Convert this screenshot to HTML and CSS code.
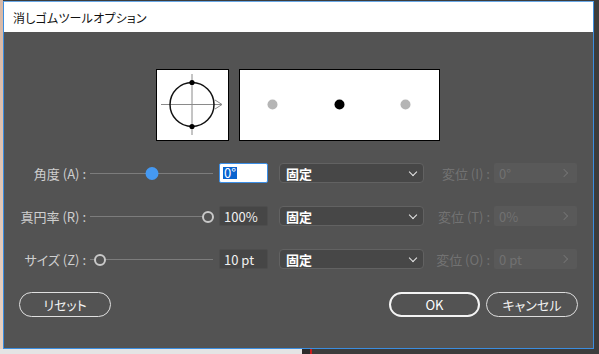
FILE: index.html
```html
<!DOCTYPE html>
<html lang="ja">
<head>
<meta charset="utf-8">
<title>消しゴムツールオプション</title>
<link rel="stylesheet" href="styles.css">
</head>
<body>
<div class="dialog">
  <div class="titlebar">消しゴムツールオプション</div>
  <div class="content">
    <div class="previews">
      <div class="pbox pbox-small">
        <svg width="71" height="70" viewBox="0 0 71 70">
          <line x1="35" y1="4" x2="35" y2="65" stroke="#8a8a8a" stroke-width="1"/>
          <line x1="4" y1="34.5" x2="65" y2="34.5" stroke="#8a8a8a" stroke-width="1"/>
          <polyline points="58,30 65,34.5 58,39" fill="none" stroke="#8a8a8a" stroke-width="1"/>
          <circle cx="35" cy="34.5" r="22" fill="none" stroke="#111" stroke-width="1.5"/>
          <circle cx="35" cy="12.5" r="2.6" fill="#000"/>
          <circle cx="35" cy="56.5" r="2.6" fill="#000"/>
        </svg>
      </div>
      <div class="pbox pbox-wide">
        <svg width="199" height="70" viewBox="0 0 199 70">
          <circle cx="32.5" cy="34.5" r="5" fill="#b5b5b5"/>
          <circle cx="99.5" cy="34.5" r="5" fill="#000"/>
          <circle cx="165.5" cy="34.5" r="5" fill="#b5b5b5"/>
        </svg>
      </div>
    </div>

    <div class="rows">
      <div class="row">
        <label class="lbl">角度 (A) :</label>
        <div class="slider"><span class="knob knob-fill" style="left: 50%"></span></div>
        <div class="field field-active"><span class="sel">0°</span></div>
        <div class="select">固定<span class="chev"></span></div>
        <span class="lbl2">変位 (I) :</span>
        <div class="field-dis">0°<span class="chev-r"></span></div>
      </div>
      <div class="row">
        <label class="lbl">真円率 (R) :</label>
        <div class="slider"><span class="knob knob-ring" style="left: 100%"></span></div>
        <div class="field">100%</div>
        <div class="select">固定<span class="chev"></span></div>
        <span class="lbl2">変位 (T) :</span>
        <div class="field-dis">0%<span class="chev-r"></span></div>
      </div>
      <div class="row">
        <label class="lbl">サイズ (Z) :</label>
        <div class="slider"><span class="knob knob-ring" style="left: 0%"></span></div>
        <div class="field">10 pt</div>
        <div class="select">固定<span class="chev"></span></div>
        <span class="lbl2">変位 (O) :</span>
        <div class="field-dis">0 pt<span class="chev-r"></span></div>
      </div>
    </div>

    <div class="buttons">
      <button class="btn btn-reset">リセット</button>
      <div class="spacer"></div>
      <button class="btn btn-ok">OK</button>
      <button class="btn btn-cancel">キャンセル</button>
    </div>
  </div>
</div>
</body>
</html>
```

FILE: styles.css
```css
html, body {
  margin: 0;
  padding: 0;
  width: 599px;
  height: 354px;
  overflow: hidden;
}

body {
  font-family: "Noto Sans CJK JP", "Noto Sans", sans-serif;
  font-feature-settings: "palt";
  background:
    linear-gradient(#e4e4e4, #e4e4e4) 0 349px / 302px 5px no-repeat,
    linear-gradient(#cc1b1b, #cc1b1b) 310px 349px / 2px 5px no-repeat,
    linear-gradient(#2b2b2b, #2b2b2b) 302px 349px / 8px 5px no-repeat,
    linear-gradient(#d8b8a6, #e7d2c4) 0 0 / 3px 354px no-repeat,
    #3c3c3c;
  display: flex;
  align-items: flex-start;
}

.dialog {
  margin: 1px 0 0 3px;
  width: 591px;
  height: 348px;
  box-sizing: border-box;
  border: 1px solid #3b8ddf;
  border-top-color: #6aa8e6;
  background: #535353;
  display: flex;
  flex-direction: column;
}

.titlebar {
  height: 30px;
  background: #ffffff;
  color: #111;
  font-size: 12px;
  display: flex;
  align-items: center;
  padding-left: 9px;
  letter-spacing: 0.2px;
}

.content {
  flex: 1;
  display: flex;
  flex-direction: column;
  padding-top: 37px;
}

.previews {
  display: flex;
  justify-content: center;
  gap: 10px;
  padding-right: 1px;
}

.pbox {
  height: 72px;
  box-sizing: border-box;
  border: 1px solid #000;
  background: #fff;
}

.pbox svg {
  display: block;
}

.pbox-small {
  width: 73px;
}

.pbox-wide {
  width: 201px;
}

.rows {
  display: flex;
  flex-direction: column;
  gap: 23px;
  margin-top: 22px;
}

.row {
  display: flex;
  align-items: center;
  height: 20px;
}

.lbl {
  width: 82px;
  text-align: right;
  color: #cfcfcf;
  font-size: 13px;
  white-space: nowrap;
}

.slider {
  position: relative;
  margin-left: 4px;
  width: 123px;
  height: 20px;
  display: flex;
  align-items: center;
}

.slider::before {
  content: "";
  display: block;
  width: 100%;
  height: 1px;
  border-top: 1px solid #7c7c7c;
  margin-top: 1px;
}

.knob {
  position: absolute;
  top: 50%;
  width: 12px;
  height: 12px;
  box-sizing: border-box;
  border-radius: 50%;
  margin-top: -5px;
  margin-left: 4px;
  transform: translateX(-50%);
}

.knob-fill {
  background: #4599f2;
  width: 13px;
  height: 13px;
  margin-top: -6px;
  margin-left: 0;
}

.knob-ring {
  background: #535353;
  border: 2px solid #c9c9c9;
  width: 12px;
  height: 12px;
  margin-top: -5px;
}

.knob-ring[style*="100%"] {
  margin-left: -5px;
}

.knob-ring[style*="left: 0%"] {
  margin-left: 10px;
}

.field {
  margin-left: 6px;
  width: 49px;
  height: 20px;
  box-sizing: border-box;
  background: #464646;
  border: 1px solid #4d4d4d;
  border-radius: 2px;
  color: #f0f0f0;
  font-size: 13px;
  display: flex;
  align-items: center;
  padding-left: 4px;
  white-space: nowrap;
}

.field-active {
  background: #ffffff;
  border: 1.5px solid #3b8ee6;
  padding-left: 3px;
}

.sel {
  background: #0a63cf;
  color: #ffffff;
  line-height: 12px;
  padding: 0 1px 0 1px;
  height: 12px;
  display: flex;
  align-items: center;
}

.select {
  margin-left: 11px;
  width: 145px;
  height: 20px;
  box-sizing: border-box;
  background: #474747;
  border: 1px solid #626262;
  border-radius: 4px;
  color: #ffffff;
  font-size: 13px;
  font-weight: bold;
  display: flex;
  align-items: center;
  padding-left: 6px;
  position: relative;
}

.chev {
  position: absolute;
  right: 7px;
  top: 5px;
  width: 5px;
  height: 5px;
  border-right: 1.5px solid #e8e8e8;
  border-bottom: 1.5px solid #e8e8e8;
  transform: rotate(45deg);
}

.lbl2 {
  width: 66px;
  text-align: right;
  color: #727272;
  font-size: 13px;
  white-space: nowrap;
}

.field-dis {
  margin-left: 4px;
  width: 83px;
  height: 20px;
  box-sizing: border-box;
  background: #595959;
  border-radius: 2px;
  color: #717171;
  font-size: 13px;
  display: flex;
  align-items: center;
  padding-left: 5px;
  position: relative;
}

.chev-r {
  position: absolute;
  right: 10px;
  top: 7px;
  width: 5px;
  height: 5px;
  border-right: 1.5px solid #717171;
  border-top: 1.5px solid #717171;
  transform: rotate(45deg);
}

.buttons {
  display: flex;
  align-items: center;
  margin-top: 23px;
  padding: 0 15px;
  gap: 6px;
}

.spacer {
  flex: 1;
}

.btn {
  height: 25px;
  box-sizing: border-box;
  border-radius: 13px;
  background: transparent;
  color: #f2f2f2;
  font-family: "Noto Sans CJK JP", "Noto Sans", sans-serif;
  font-feature-settings: "palt";
  font-size: 13px;
  padding: 0;
  display: flex;
  align-items: center;
  justify-content: center;
}

.btn-reset {
  width: 92px;
  border: 1.5px solid #e0e0e0;
}

.btn-ok {
  width: 91px;
  border: 2px solid #f4f4f4;
  color: #ffffff;
}

.btn-cancel {
  width: 92px;
  border: 1.5px solid #dddddd;
}
```
